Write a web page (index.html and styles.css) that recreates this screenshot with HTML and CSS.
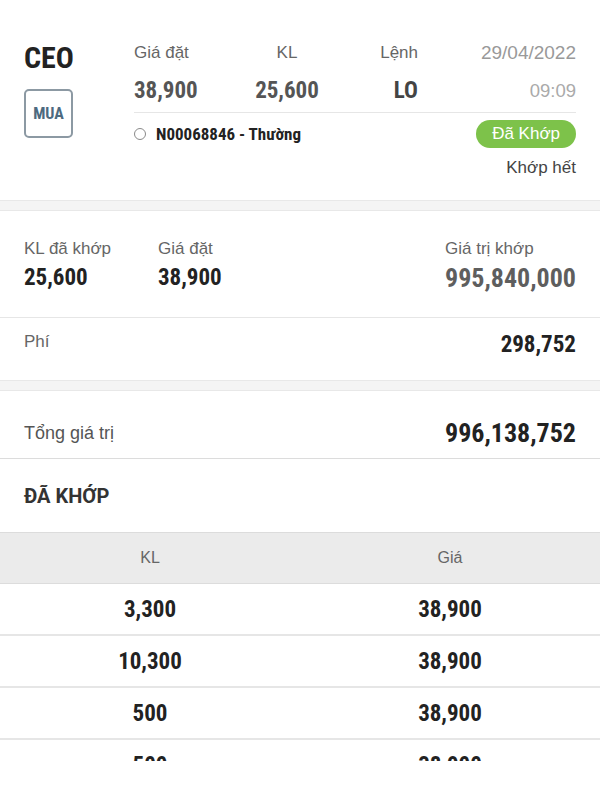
FILE: index.html
```html
<!DOCTYPE html>
<html lang="vi">
<head>
<meta charset="utf-8">
<title>Chi tiết lệnh</title>
<link rel="stylesheet" href="styles.css">
</head>
<body>
<div class="screen">
  <section class="order">
    <div class="order-left">
      <div class="symbol num">CEO</div>
      <div class="side num">MUA</div>
    </div>
    <div class="order-right">
      <div class="cols">
        <div class="col c1"><div class="lbl">Giá đặt</div><div class="val num">38,900</div></div>
        <div class="col c2"><div class="lbl">KL</div><div class="val num">25,600</div></div>
        <div class="col c3"><div class="lbl">Lệnh</div><div class="val num">LO</div></div>
        <div class="col c4"><div class="lbl date">29/04/2022</div><div class="time">09:09</div></div>
      </div>
      <div class="status-row">
        <div class="order-id"><span class="dot"></span><span class="num">N00068846 - Thường</span></div>
        <div class="status">
          <span class="badge">Đã Khớp</span>
          <span class="sub">Khớp hết</span>
        </div>
      </div>
    </div>
  </section>

  <div class="band"></div>

  <section class="summary">
    <div class="item w1"><div class="lbl">KL đã khớp</div><div class="val num">25,600</div></div>
    <div class="item"><div class="lbl">Giá đặt</div><div class="val num">38,900</div></div>
    <div class="item right"><div class="lbl">Giá trị khớp</div><div class="val num muted">995,840,000</div></div>
  </section>

  <section class="fee">
    <div class="lbl">Phí</div>
    <div class="val num">298,752</div>
  </section>

  <div class="band"></div>

  <section class="total">
    <div class="lbl big">Tổng giá trị</div>
    <div class="val num large">996,138,752</div>
  </section>

  <h2 class="title">ĐÃ KHỚP</h2>

  <div class="table">
    <div class="thead"><div>KL</div><div>Giá</div></div>
    <div class="trow num"><div>3,300</div><div>38,900</div></div>
    <div class="trow num"><div>10,300</div><div>38,900</div></div>
    <div class="trow num"><div>500</div><div>38,900</div></div>
    <div class="trow num"><div>500</div><div>38,900</div></div>
  </div>
</div>
</body>
</html>
```
FILE: styles.css
```css
* { box-sizing: border-box; margin: 0; padding: 0; }
body {
  background: #fff;
  font-family: "Liberation Sans", Arial, sans-serif;
  color: #222;
  width: 600px;
}
.num {
  font-family: "Roboto Condensed", "Liberation Sans Narrow", "DejaVu Sans Condensed", Roboto, sans-serif;
  font-stretch: condensed;
  font-weight: 700;
}
.screen { height: 761px; overflow: hidden; }

/* order header */
.order { display: flex; padding: 42px 24px 21px; }
.order-left { width: 110px; }
.symbol { font-size: 30px; line-height: 32px; color: #222; }
.side {
  margin-top: 15px;
  width: 49px; height: 49px;
  border: 2px solid #8c99a3;
  border-radius: 5px;
  display: flex; align-items: center; justify-content: center;
  font-size: 16px; color: #4d6a80;
}
.order-right { flex: 1; }
.cols {
  display: grid;
  grid-template-columns: 100px 106px 78px 1fr;
  padding-bottom: 7px;
  border-bottom: 1px solid #e6e6e6;
}
.col { display: flex; flex-direction: column; gap: 13px; }
.c1 { align-items: flex-start; }
.c2 { align-items: center; }
.c3, .c4 { align-items: flex-end; }
.lbl { font-size: 17px; line-height: 22px; color: #666; }
.cols .val { font-size: 23px; line-height: 28px; color: #555; }
.c3 .val { color: #444; }
.date { font-size: 19px; color: #999; }
.time { font-size: 18.5px; line-height: 28px; color: #aaa; }

.status-row { display: flex; justify-content: space-between; padding-top: 7px; }
.order-id { display: flex; align-items: center; gap: 10px; height: 28px; padding-left: 0; }
.order-id .num { font-size: 17px; color: #222; }
.dot { width: 12px; height: 12px; border: 1.5px solid #8a8a8a; border-radius: 50%; }
.status { display: flex; flex-direction: column; align-items: flex-end; gap: 9px; }
.badge {
  background: #7dc24a; color: #fff;
  height: 28px; line-height: 28px;
  padding: 0 16px; border-radius: 14px;
  font-size: 17px;
}
.sub { font-size: 17px; line-height: 22px; color: #444; }

.band {
  height: 11px;
  background: #f4f4f4;
  border-top: 1px solid #e8e8e8;
  border-bottom: 1px solid #e8e8e8;
}

/* summary */
.summary { display: flex; padding: 27px 24px 25px; border-bottom: 1px solid #e6e6e6; }
.item { display: flex; flex-direction: column; gap: 4px; }
.item.w1 { width: 134px; }
.item.right { margin-left: auto; }
.summary .val { font-size: 23px; line-height: 28px; color: #222; }
.summary .val.muted { font-size: 26px; color: #5e5e5e; }

.fee { display: flex; justify-content: space-between; align-items: flex-start; padding: 13px 24px 21px; }
.fee .val { font-size: 23px; line-height: 28px; color: #222; }

.total {
  display: flex; justify-content: space-between; align-items: center;
  padding: 16px 24px 0; height: 68px;
  border-bottom: 1px solid #dcdcdc;
}
.lbl.big { font-size: 18px; color: #555; }
.val.large { font-size: 26px; line-height: 32px; color: #222; }

.title {
  font-family: Roboto, "Liberation Sans", sans-serif;
  font-size: 20px; line-height: 24px; font-weight: 700; color: #333;
  padding: 25px 24px 24px;
}

/* table */
.thead {
  display: grid; grid-template-columns: 1fr 1fr;
  height: 52px; align-items: center; text-align: center;
  background: #ebebeb;
  border-top: 1px solid #dcdcdc;
  border-bottom: 1px solid #dcdcdc;
  font-size: 16px; color: #666;
}
.trow {
  display: grid; grid-template-columns: 1fr 1fr;
  height: 52px; align-items: center; text-align: center;
  border-bottom: 2px solid #e6e6e6;
  font-size: 23px; color: #222;
}
```
